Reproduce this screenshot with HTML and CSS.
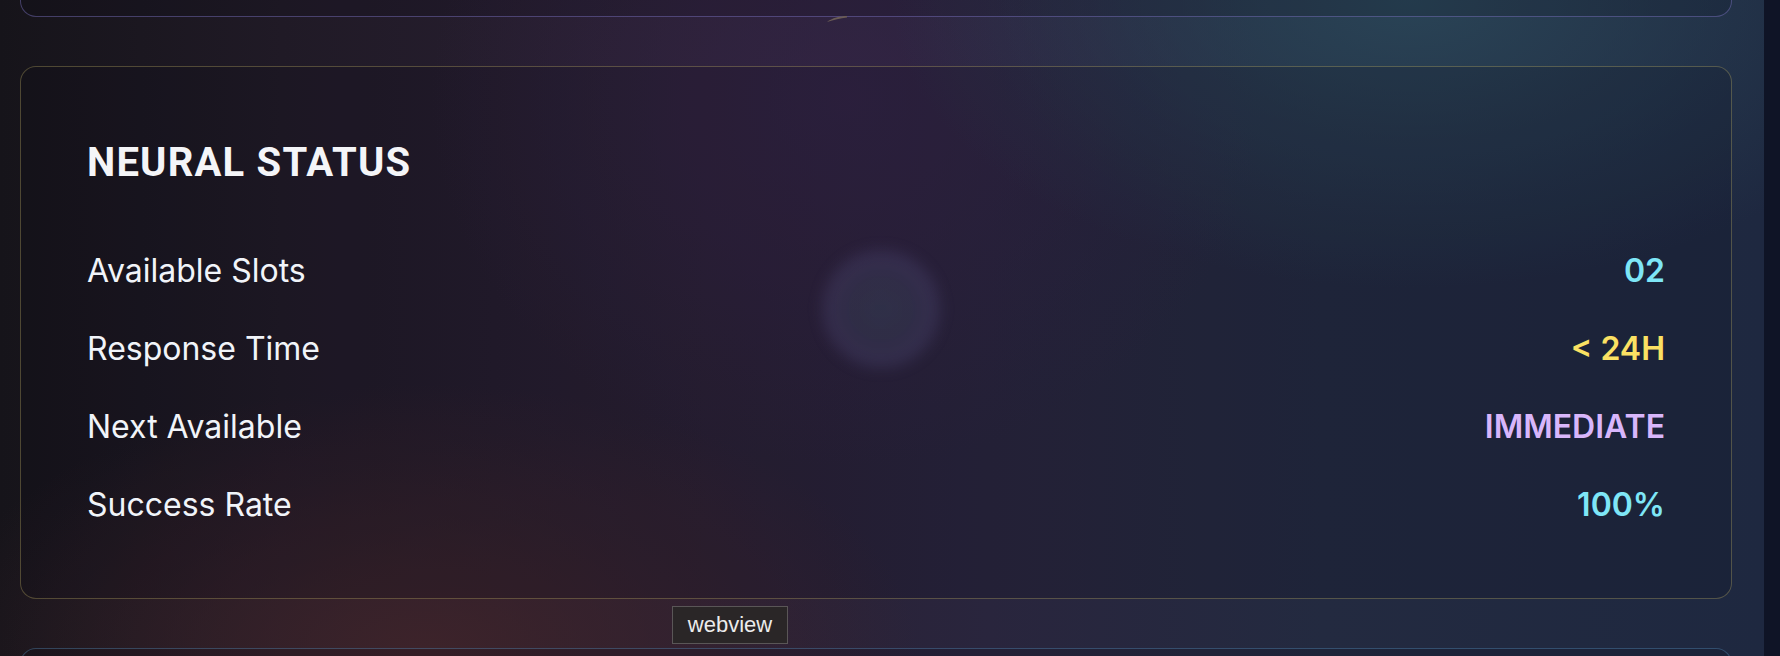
FILE: index.html
```html
<!DOCTYPE html>
<html lang="en">
<head>
<meta charset="utf-8">
<title>Neural Status</title>
<link rel="stylesheet" href="styles.css">
</head>
<body>
<div class="viewport">
  <main class="page">
    <div class="card card-top"></div>
    <section class="card card-status">
      <div class="glow"></div>
      <h2 class="title">NEURAL STATUS</h2>
      <ul class="stats">
        <li class="row"><span class="label">Available Slots</span><span class="value cyan">02</span></li>
        <li class="row"><span class="label">Response Time</span><span class="value yellow">&lt; 24H</span></li>
        <li class="row"><span class="label">Next Available</span><span class="value purple">IMMEDIATE</span></li>
        <li class="row"><span class="label">Success Rate</span><span class="value cyan">100%</span></li>
      </ul>
    </section>
    <div class="card card-bottom"></div>
    <svg class="sliver" width="24" height="8" viewBox="0 0 24 8"><path d="M1 7 C6 3 14 1 21 1 L21 2.5 C14 3 8 5 1 7 Z" fill="#6a5c55"/></svg>
    <div class="tooltip">webview</div>
  </main>
  <div class="scrollbar"></div>
</div>
</body>
</html>
```

FILE: styles.css
```css
html, body {
  margin: 0;
  padding: 0;
  width: 1780px;
  height: 656px;
  overflow: hidden;
  background: #0f1426;
}

.viewport {
  display: flex;
  width: 1780px;
  height: 656px;
}

.page {
  position: relative;
  flex: 0 0 1764px;
  height: 656px;
  overflow: hidden;
  display: flex;
  flex-direction: column;
  gap: 49px;
  padding: 0 32px 0 20px;
  box-sizing: border-box;
  background:
    radial-gradient(ellipse 650px 360px at 80% 0%, rgba(42, 70, 88, 0.9), rgba(42, 70, 88, 0) 80%),
    radial-gradient(ellipse 620px 340px at 24% 100%, rgba(64, 36, 42, 0.9), rgba(64, 36, 42, 0) 80%),
    radial-gradient(ellipse 520px 460px at 48% 15%, rgba(52, 36, 70, 0.75), rgba(52, 36, 70, 0) 80%),
    linear-gradient(90deg, #16141a 0%, #201a26 16%, #2a2034 40%, #29253d 56%, #232a40 75%, #1e2840 100%);
  font-family: Inter, "Noto Sans", sans-serif;
}

.card {
  flex: 0 0 auto;
  border-radius: 16px;
  background: rgba(10, 10, 20, 0.15);
  box-sizing: border-box;
}

.card-top {
  height: 17px;
  border: 1px solid rgba(140, 130, 220, 0.4);
  border-top: none;
  border-radius: 0 0 16px 16px;
}

.card-status {
  position: relative;
  height: 533px;
  border: 1px solid rgba(215, 200, 110, 0.3);
  padding: 72px 66px 0 66px;
}

.card-bottom {
  height: 40px;
  border: 1px solid rgba(100, 170, 220, 0.32);
}

.glow {
  position: absolute;
  left: 800px;
  top: 182px;
  width: 120px;
  height: 120px;
  border-radius: 50%;
  background: radial-gradient(circle, rgba(70, 100, 120, 0.26) 0%, rgba(80, 92, 125, 0.24) 42%, rgba(105, 100, 160, 0.22) 62%, rgba(105, 100, 160, 0) 82%);
  filter: blur(7px);
}

.title {
  position: relative;
  margin: 0;
  font-family: Roboto, "Noto Sans", sans-serif;
  font-weight: 700;
  font-size: 40px;
  line-height: 48px;
  letter-spacing: 1.2px;
  color: #f4f5f8;
}

.stats {
  position: relative;
  list-style: none;
  margin: 64px 0 0 0;
  padding: 0;
  display: flex;
  flex-direction: column;
  gap: 38px;
}

.row {
  display: flex;
  justify-content: space-between;
  align-items: baseline;
  height: 40px;
  font-size: 32px;
  line-height: 40px;
}

.label {
  color: #f1f4f9;
  font-weight: 400;
}

.value {
  font-weight: 600;
}

.cyan { color: #7ee6f7; }
.yellow { color: #fbe163; }
.purple { color: #d8b6fb; }

.sliver {
  position: absolute;
  left: 826px;
  top: 15px;
}

.tooltip {
  position: absolute;
  left: 672px;
  top: 606px;
  width: 116px;
  height: 38px;
  box-sizing: border-box;
  border: 1px solid #5a5657;
  background: #2a2627;
  color: #ececec;
  font-family: "Liberation Sans", Arial, sans-serif;
  font-size: 22px;
  line-height: 36px;
  text-align: center;
}

.scrollbar {
  flex: 0 0 16px;
  height: 656px;
  background: #0f1426;
}
```
